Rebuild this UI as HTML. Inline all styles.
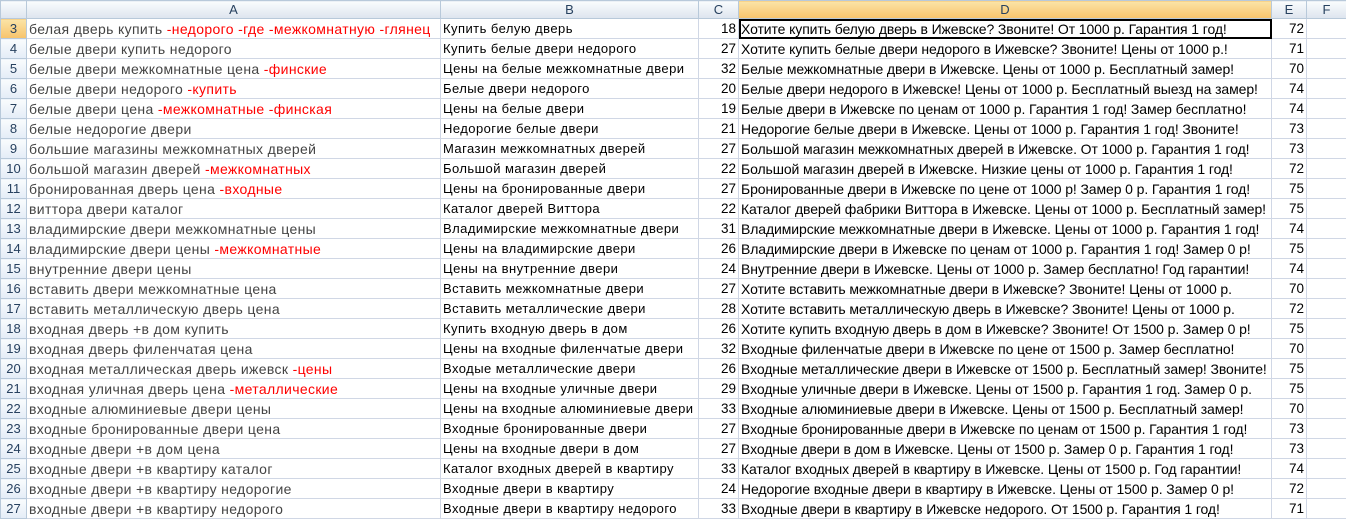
<!DOCTYPE html><html><head><meta charset="utf-8"><style>
body{margin:0;width:1346px;height:520px;overflow:hidden;background:#fff;font-family:"Liberation Sans",sans-serif}
table{border-collapse:collapse;table-layout:fixed;position:absolute;left:0;top:0;width:1346px}
td,th{border:1px solid #d0d7e5;height:19px;padding:0 2px;white-space:nowrap;overflow:hidden;font-size:13px;color:#000}
th{background:linear-gradient(#f9fcfd,#dde4ee);font-weight:normal;color:#27415f;font-size:13px;height:17px;border-color:#b8c9da}
th.sel{background:linear-gradient(#fbe4a7,#f7c36b);color:#27415f}
td.h{background:linear-gradient(#f9fcfd,#e4ecf7);color:#27415f;text-align:center;border-color:#b8c9da;padding:0}
td.hs{background:linear-gradient(#fbe4a7,#f7c36b)}
td.a{font-size:14px;color:#444;padding-left:2px;letter-spacing:0.35px}
.r{color:#f00}
td.n{text-align:right;font-size:13.5px}
td.b{letter-spacing:0.45px}
td.d{font-size:14px;letter-spacing:-0.1px}
td.cur{outline:2px solid #000;outline-offset:-2px}
</style></head><body>
<table>
<colgroup><col style="width:26px"><col style="width:414px"><col style="width:258px"><col style="width:40px"><col style="width:533px"><col style="width:35px"><col style="width:40px"></colgroup>
<tr><th></th><th>A</th><th>B</th><th>C</th><th class="sel">D</th><th>E</th><th>F</th></tr>
<tr><td class="h hs">3</td><td class="a">белая дверь купить <span class="r">-недорого -где -межкомнатную -глянец</span></td><td class="b">Купить белую дверь</td><td class="n">18</td><td class="d cur">Хотите купить белую дверь в Ижевске? Звоните! От 1000 р. Гарантия 1 год!</td><td class="n">72</td><td></td></tr>
<tr><td class="h">4</td><td class="a">белые двери купить недорого</td><td class="b">Купить белые двери недорого</td><td class="n">27</td><td class="d">Хотите купить белые двери недорого в Ижевске? Звоните! Цены от 1000 р.!</td><td class="n">71</td><td></td></tr>
<tr><td class="h">5</td><td class="a">белые двери межкомнатные цена <span class="r">-финские</span></td><td class="b">Цены на белые межкомнатные двери</td><td class="n">32</td><td class="d">Белые межкомнатные двери в Ижевске. Цены от 1000 р. Бесплатный замер!</td><td class="n">70</td><td></td></tr>
<tr><td class="h">6</td><td class="a">белые двери недорого <span class="r">-купить</span></td><td class="b">Белые двери недорого</td><td class="n">20</td><td class="d">Белые двери недорого в Ижевске! Цены от 1000 р. Бесплатный выезд на замер!</td><td class="n">74</td><td></td></tr>
<tr><td class="h">7</td><td class="a">белые двери цена <span class="r">-межкомнатные -финская</span></td><td class="b">Цены на белые двери</td><td class="n">19</td><td class="d">Белые двери в Ижевске по ценам от 1000 р. Гарантия 1 год! Замер бесплатно!</td><td class="n">74</td><td></td></tr>
<tr><td class="h">8</td><td class="a">белые недорогие двери</td><td class="b">Недорогие белые двери</td><td class="n">21</td><td class="d">Недорогие белые двери в Ижевске. Цены от 1000 р. Гарантия 1 год! Звоните!</td><td class="n">73</td><td></td></tr>
<tr><td class="h">9</td><td class="a">большие магазины межкомнатных дверей</td><td class="b">Магазин межкомнатных дверей</td><td class="n">27</td><td class="d">Большой магазин межкомнатных дверей в Ижевске. От 1000 р. Гарантия 1 год!</td><td class="n">73</td><td></td></tr>
<tr><td class="h">10</td><td class="a">большой магазин дверей <span class="r">-межкомнатных</span></td><td class="b">Большой магазин дверей</td><td class="n">22</td><td class="d">Большой магазин дверей в Ижевске. Низкие цены от 1000 р. Гарантия 1 год!</td><td class="n">72</td><td></td></tr>
<tr><td class="h">11</td><td class="a">бронированная дверь цена <span class="r">-входные</span></td><td class="b">Цены на бронированные двери</td><td class="n">27</td><td class="d">Бронированные двери в Ижевске по цене от 1000 р! Замер 0 р. Гарантия 1 год!</td><td class="n">75</td><td></td></tr>
<tr><td class="h">12</td><td class="a">виттора двери каталог</td><td class="b">Каталог дверей Виттора</td><td class="n">22</td><td class="d">Каталог дверей фабрики Виттора в Ижевске. Цены от 1000 р. Бесплатный замер!</td><td class="n">75</td><td></td></tr>
<tr><td class="h">13</td><td class="a">владимирские двери межкомнатные цены</td><td class="b">Владимирские межкомнатные двери</td><td class="n">31</td><td class="d">Владимирские межкомнатные двери в Ижевске. Цены от 1000 р. Гарантия 1 год!</td><td class="n">74</td><td></td></tr>
<tr><td class="h">14</td><td class="a">владимирские двери цены <span class="r">-межкомнатные</span></td><td class="b">Цены на владимирские двери</td><td class="n">26</td><td class="d">Владимирские двери в Ижевске по ценам от 1000 р. Гарантия 1 год! Замер 0 р!</td><td class="n">75</td><td></td></tr>
<tr><td class="h">15</td><td class="a">внутренние двери цены</td><td class="b">Цены на внутренние двери</td><td class="n">24</td><td class="d">Внутренние двери в Ижевске. Цены от 1000 р. Замер бесплатно! Год гарантии!</td><td class="n">74</td><td></td></tr>
<tr><td class="h">16</td><td class="a">вставить двери межкомнатные цена</td><td class="b">Вставить межкомнатные двери</td><td class="n">27</td><td class="d">Хотите вставить межкомнатные двери в Ижевске? Звоните! Цены от 1000 р.</td><td class="n">70</td><td></td></tr>
<tr><td class="h">17</td><td class="a">вставить металлическую дверь цена</td><td class="b">Вставить металлические двери</td><td class="n">28</td><td class="d">Хотите вставить металлическую дверь в Ижевске? Звоните! Цены от 1000 р.</td><td class="n">72</td><td></td></tr>
<tr><td class="h">18</td><td class="a">входная дверь +в дом купить</td><td class="b">Купить входную дверь в дом</td><td class="n">26</td><td class="d">Хотите купить входную дверь в дом в Ижевске? Звоните! От 1500 р. Замер 0 р!</td><td class="n">75</td><td></td></tr>
<tr><td class="h">19</td><td class="a">входная дверь филенчатая цена</td><td class="b">Цены на входные филенчатые двери</td><td class="n">32</td><td class="d">Входные филенчатые двери в Ижевске по цене от 1500 р. Замер бесплатно!</td><td class="n">70</td><td></td></tr>
<tr><td class="h">20</td><td class="a">входная металлическая дверь ижевск <span class="r">-цены</span></td><td class="b">Входые металлические двери</td><td class="n">26</td><td class="d">Входные металлические двери в Ижевске от 1500 р. Бесплатный замер! Звоните!</td><td class="n">75</td><td></td></tr>
<tr><td class="h">21</td><td class="a">входная уличная дверь цена <span class="r">-металлические</span></td><td class="b">Цены на входные уличные двери</td><td class="n">29</td><td class="d">Входные уличные двери в Ижевске. Цены от 1500 р. Гарантия 1 год. Замер 0 р.</td><td class="n">75</td><td></td></tr>
<tr><td class="h">22</td><td class="a">входные алюминиевые двери цены</td><td class="b">Цены на входные алюминиевые двери</td><td class="n">33</td><td class="d">Входные алюминиевые двери в Ижевске. Цены от 1500 р. Бесплатный замер!</td><td class="n">70</td><td></td></tr>
<tr><td class="h">23</td><td class="a">входные бронированные двери цена</td><td class="b">Входные бронированные двери</td><td class="n">27</td><td class="d">Входные бронированные двери в Ижевске по ценам от 1500 р. Гарантия 1 год!</td><td class="n">73</td><td></td></tr>
<tr><td class="h">24</td><td class="a">входные двери +в дом цена</td><td class="b">Цены на входные двери в дом</td><td class="n">27</td><td class="d">Входные двери в дом в Ижевске. Цены от 1500 р. Замер 0 р. Гарантия 1 год!</td><td class="n">73</td><td></td></tr>
<tr><td class="h">25</td><td class="a">входные двери +в квартиру каталог</td><td class="b">Каталог входных дверей в квартиру</td><td class="n">33</td><td class="d">Каталог входных дверей в квартиру в Ижевске. Цены от 1500 р. Год гарантии!</td><td class="n">74</td><td></td></tr>
<tr><td class="h">26</td><td class="a">входные двери +в квартиру недорогие</td><td class="b">Входные двери в квартиру</td><td class="n">24</td><td class="d">Недорогие входные двери в квартиру в Ижевске. Цены от 1500 р. Замер 0 р!</td><td class="n">72</td><td></td></tr>
<tr><td class="h">27</td><td class="a">входные двери +в квартиру недорого</td><td class="b">Входные двери в квартиру недорого</td><td class="n">33</td><td class="d">Входные двери в квартиру в Ижевске недорого. От 1500 р. Гарантия 1 год!</td><td class="n">71</td><td></td></tr>
</table>
</body></html>
